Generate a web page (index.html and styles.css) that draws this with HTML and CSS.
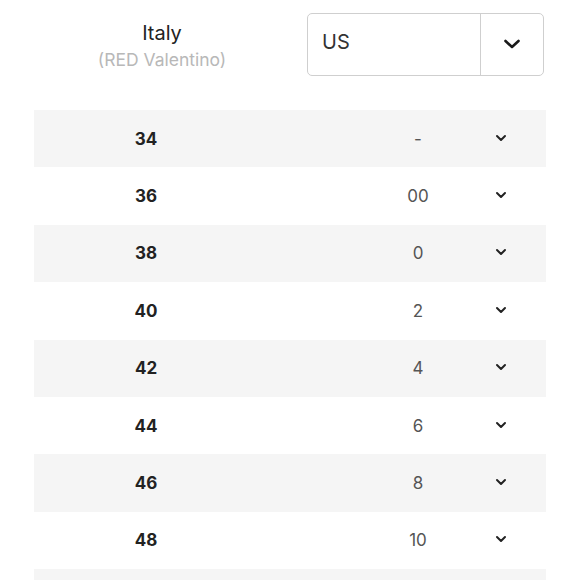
FILE: index.html
```html
<!DOCTYPE html>
<html>
<head>
<meta charset="utf-8">
<link rel="stylesheet" href="styles.css">
</head>
<body>
<div class="page">
  <div class="header">
    <div class="brand">
      <div class="country">Italy</div>
      <div class="label">(RED Valentino)</div>
    </div>
    <div class="select">
      <div class="select-value">US</div>
      <div class="select-btn">
        <svg width="18" height="12" viewBox="0 0 18 12"><path d="M2.5 3 L9 9 L15.5 3" fill="none" stroke="#1a1a1a" stroke-width="2.6" stroke-linecap="round" stroke-linejoin="round"/></svg>
      </div>
    </div>
  </div>
  <div class="table">
    <div class="row alt"><div class="size">34</div><div></div><div class="val">-</div><div class="chev"><svg width="12" height="8" viewBox="0 0 12 8"><path d="M2 2 L6 6 L10 2" fill="none" stroke="#222" stroke-width="2" stroke-linecap="round" stroke-linejoin="round"/></svg></div></div>
    <div class="row"><div class="size">36</div><div></div><div class="val">00</div><div class="chev"><svg width="12" height="8" viewBox="0 0 12 8"><path d="M2 2 L6 6 L10 2" fill="none" stroke="#222" stroke-width="2" stroke-linecap="round" stroke-linejoin="round"/></svg></div></div>
    <div class="row alt"><div class="size">38</div><div></div><div class="val">0</div><div class="chev"><svg width="12" height="8" viewBox="0 0 12 8"><path d="M2 2 L6 6 L10 2" fill="none" stroke="#222" stroke-width="2" stroke-linecap="round" stroke-linejoin="round"/></svg></div></div>
    <div class="row"><div class="size">40</div><div></div><div class="val">2</div><div class="chev"><svg width="12" height="8" viewBox="0 0 12 8"><path d="M2 2 L6 6 L10 2" fill="none" stroke="#222" stroke-width="2" stroke-linecap="round" stroke-linejoin="round"/></svg></div></div>
    <div class="row alt"><div class="size">42</div><div></div><div class="val">4</div><div class="chev"><svg width="12" height="8" viewBox="0 0 12 8"><path d="M2 2 L6 6 L10 2" fill="none" stroke="#222" stroke-width="2" stroke-linecap="round" stroke-linejoin="round"/></svg></div></div>
    <div class="row"><div class="size">44</div><div></div><div class="val">6</div><div class="chev"><svg width="12" height="8" viewBox="0 0 12 8"><path d="M2 2 L6 6 L10 2" fill="none" stroke="#222" stroke-width="2" stroke-linecap="round" stroke-linejoin="round"/></svg></div></div>
    <div class="row alt"><div class="size">46</div><div></div><div class="val">8</div><div class="chev"><svg width="12" height="8" viewBox="0 0 12 8"><path d="M2 2 L6 6 L10 2" fill="none" stroke="#222" stroke-width="2" stroke-linecap="round" stroke-linejoin="round"/></svg></div></div>
    <div class="row"><div class="size">48</div><div></div><div class="val">10</div><div class="chev"><svg width="12" height="8" viewBox="0 0 12 8"><path d="M2 2 L6 6 L10 2" fill="none" stroke="#222" stroke-width="2" stroke-linecap="round" stroke-linejoin="round"/></svg></div></div>
    <div class="row alt"></div>
  </div>
</div>
</body>
</html>
```

FILE: styles.css
```css
html, body {
  margin: 0;
  padding: 0;
  background: #fff;
}
body {
  font-family: "Inter", "Liberation Sans", sans-serif;
  color: #222;
  overflow: hidden;
  height: 580px;
}
.page {
  padding: 0 34px;
}
.header {
  display: flex;
  align-items: flex-start;
  padding-top: 13px;
  height: 97px;
}
.brand {
  width: 256px;
  text-align: center;
  padding-top: 8px;
}
.country {
  font-size: 20px;
  line-height: 24px;
  color: #222;
}
.label {
  font-size: 17.5px;
  line-height: 24px;
  color: #b8b8b8;
  margin-top: 3px;
}
.select {
  margin-left: 17px;
  width: 237px;
  height: 63px;
  box-sizing: border-box;
  border: 1.5px solid #cfcfcf;
  border-radius: 5px;
  display: flex;
}
.select-value {
  flex: 1;
  font-size: 20px;
  padding-left: 14px;
  padding-top: 16px;
  color: #333;
}
.select-btn {
  width: 62px;
  border-left: 1.5px solid #cfcfcf;
  display: flex;
  align-items: center;
  justify-content: center;
  padding-bottom: 2px;
}
.table {
  width: 512px;
}
.row {
  display: grid;
  grid-template-columns: 224px 1fr 120px 46px 22px;
  align-items: center;
  height: 57.4px;
}
.row.alt {
  background: #f5f5f5;
}
.size {
  text-align: center;
  font-weight: 700;
  font-size: 17px;
  color: #222;
}
.val {
  text-align: center;
  font-size: 17px;
  color: #555;
}
.chev {
  display: flex;
  justify-content: center;
  align-items: center;
  padding-bottom: 2px;
}
```
